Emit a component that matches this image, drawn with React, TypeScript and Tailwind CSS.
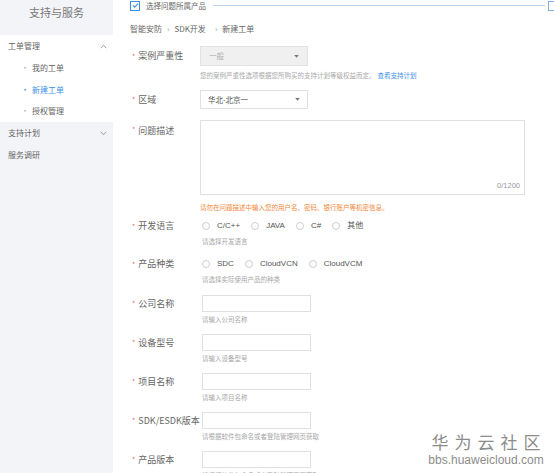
import React from 'react';

const cjk = '"Noto Sans CJK SC", "Noto Sans", sans-serif';
const latin = '"Liberation Sans", "Noto Sans CJK SC", Arial, sans-serif';

function Chevron({ up }: { up?: boolean }) {
  return (
    <svg width="7" height="5" viewBox="0 0 7 5" className="text-[#999]">
      <path d={up ? 'M0.8 4.2 L3.5 1.2 L6.2 4.2' : 'M0.8 0.8 L3.5 3.8 L6.2 0.8'} fill="none" stroke="currentColor" strokeWidth="0.9" />
    </svg>
  );
}

function Caret() {
  return (
    <svg width="5" height="3" viewBox="0 0 6 4">
      <path d="M0 0 L6 0 L3 3.5 Z" fill="#777" />
    </svg>
  );
}

function Label({ text }: { text: string }) {
  return (
    <div className="w-[70px] shrink-0 flex items-center pl-[2px] text-[9px] text-[#666] whitespace-nowrap">
      <span className="text-[#e86a6a] text-[7px] mr-[3px]">*</span>
      <span>{text}</span>
    </div>
  );
}

function Help({ children, mt = 'mt-[2px]' }: { children: React.ReactNode; mt?: string }) {
  return (
    <div className={`${mt} pl-[72px] h-[10px] leading-[10px] text-[6.5px] text-[#a8a8a8]`}>{children}</div>
  );
}

function Radio({ text }: { text: string }) {
  return (
    <div className="flex items-center mr-[11px]">
      <span className="w-[8px] h-[8px] rounded-full border border-[#cfcfcf] bg-white mr-[7px]" />
      <span className="text-[8px] text-[#555] leading-[12px]" style={{ fontFamily: latin }}>{text}</span>
    </div>
  );
}

function InputRow({ label, help, first }: { label: string; help: string; first?: boolean }) {
  return (
    <div className={first ? 'mt-[11px]' : 'mt-[10px]'}>
      <div className="flex h-[17px]">
        <Label text={label} />
        <div className="w-[109px] h-[17px] border border-[#e0e0e0] bg-white ml-[2px]" />
      </div>
      <Help>{help}</Help>
    </div>
  );
}

export default function App() {
  return (
    <div className="relative w-[554px] h-[473px] overflow-hidden bg-white flex" style={{ fontFamily: cjk }}>
      {/* sidebar */}
      <div className="w-[113px] shrink-0 bg-[#f3f4f7] flex flex-col">
        <div className="h-[35px] flex items-center justify-center pb-[11px] text-[11px] text-[#777]">支持与服务</div>
        <div className="bg-white h-[87px] flex flex-col text-[8px] text-[#666]">
          <div className="h-[22px] flex items-center justify-between pl-[8px] pr-[6px]">
            <span>工单管理</span>
            <Chevron up />
          </div>
          <div className="h-[22px] flex items-center pl-[21px]">
            <span className="text-[#aaa] mr-[3px]">·</span>我的工单
          </div>
          <div className="h-[21px] flex items-center pl-[21px] text-[#3a90e8]">
            <span className="mr-[3px]">·</span>新建工单
          </div>
          <div className="h-[22px] flex items-center pl-[21px]">
            <span className="text-[#aaa] mr-[3px]">·</span>授权管理
          </div>
        </div>
        <div className="h-[22px] flex items-center justify-between pl-[8px] pr-[6px] text-[8px] text-[#666]">
          <span>支持计划</span>
          <Chevron />
        </div>
        <div className="h-[22px] flex items-center pl-[8px] text-[8px] text-[#666]">服务调研</div>
      </div>

      {/* main */}
      <div className="flex-1 pl-[17px] flex flex-col">
        <div className="h-[11px] flex items-center">
          <span className="w-[10px] h-[10px] border border-[#3b8ee2] bg-white flex items-center justify-center mr-[6px]">
            <svg width="7" height="5" viewBox="0 0 8 6">
              <path d="M0.8 2.8 L3 5 L7.2 0.8" fill="none" stroke="#3b8ee2" strokeWidth="1.3" />
            </svg>
          </span>
          <span className="text-[7.5px] text-[#666]">选择问题所属产品</span>
          <span className="ml-[7px] flex-1 h-px bg-[#b8d3ee]" />
          <span className="ml-[3px] w-[8px] h-[10px] border border-[#7fb0e0] -mr-[2px]" />
        </div>

        <div className="mt-[13px] h-[10px] leading-[10px] flex items-center text-[8px] text-[#666]">
          <span>智能安防</span>
          <span className="mx-[5px] text-[#999]">›</span>
          <span>SDK开发</span>
          <span className="ml-[9px] mr-[5px] text-[#999]">›</span>
          <span>新建工单</span>
        </div>

        {/* 案例严重性 */}
        <div className="mt-[12px] flex h-[20px]">
          <Label text="案例严重性" />
          <div className="w-[108px] h-[20px] border border-[#e2e2e2] bg-[#f0f0f0] flex items-center justify-between px-[8px]">
            <span className="text-[7.5px] text-[#b0b0b0]">一般</span>
            <Caret />
          </div>
        </div>
        <div className="mt-[4px] pl-[70px] h-[10px] leading-[10px] text-[6.5px] text-[#a8a8a8]">
          您的案例严重性选项根据您所购买的支持计划等级权益而定。
          <span className="text-[#3a90e8] ml-[2px]">查看支持计划</span>
        </div>

        {/* 区域 */}
        <div className="mt-[10px] flex h-[19px]">
          <Label text="区域" />
          <div className="w-[108px] h-[19px] border border-[#e0e0e0] bg-white flex items-center justify-between px-[7px]">
            <span className="text-[7.5px] text-[#555]">华北-北京一</span>
            <Caret />
          </div>
        </div>

        {/* 问题描述 */}
        <div className="mt-[11px] flex">
          <div className="w-[70px] shrink-0 flex pt-[4px] pl-[2px] text-[9px] text-[#666]">
            <span className="text-[#e86a6a] text-[7px] mr-[3px]">*</span>
            <span>问题描述</span>
          </div>
          <div className="w-[325px] h-[75px] border border-[#e0e0e0] bg-white flex items-end justify-end px-[4px] pb-[3px]">
            <span className="text-[7.5px] text-[#999]" style={{ fontFamily: latin }}>0/1200</span>
          </div>
        </div>
        <div className="mt-[7px] pl-[70px] h-[10px] leading-[10px] text-[6.5px] text-[#f0883c]">
          请勿在问题描述中输入您的用户名、密码、银行账户等机密信息。
        </div>

        {/* 开发语言 */}
        <div className="mt-[8px] flex h-[12px]">
          <Label text="开发语言" />
          <div className="flex items-center pl-[2px]">
            <Radio text="C/C++" />
            <Radio text="JAVA" />
            <Radio text="C#" />
            <Radio text="其他" />
          </div>
        </div>
        <Help mt="mt-[4px]">请选择开发语言</Help>

        {/* 产品种类 */}
        <div className="mt-[12px] flex h-[12px]">
          <Label text="产品种类" />
          <div className="flex items-center pl-[2px]">
            <Radio text="SDC" />
            <Radio text="CloudVCN" />
            <Radio text="CloudVCM" />
          </div>
        </div>
        <Help mt="mt-[4px]">请选择实际使用产品的种类</Help>

        <InputRow first label="公司名称" help="请输入公司名称" />
        <InputRow label="设备型号" help="请输入设备型号" />
        <InputRow label="项目名称" help="请输入项目名称" />
        <InputRow label="SDK/ESDK版本" help="请根据软件包命名或者登陆管理网页获取" />
        <InputRow label="产品版本" help="请根据软件包命名或者登陆管理网页获取" />
      </div>

      {/* watermark */}
      <div className="absolute left-[431px] top-[432px] w-[110px] flex flex-col items-center text-[#8c8c8c]">
        <div className="text-[17px] leading-[20px] tracking-[6px] -mr-[6px]">华为云社区</div>
        <div className="text-[12px] leading-[14px] mt-[1px]" style={{ fontFamily: latin }}>
          bbs.huaweicloud.com
        </div>
      </div>
    </div>
  );
}
